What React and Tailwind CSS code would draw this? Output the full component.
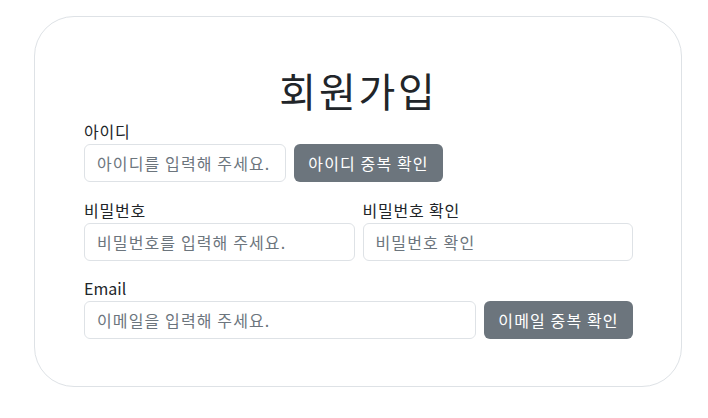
export default function App() {
  const font = { fontFamily: '"Noto Sans CJK KR", "Noto Sans", sans-serif' };
  const input =
    "h-[38px] rounded-[6px] border border-[#dee2e6] bg-white px-[12px] text-[16px] tracking-[0.07em] text-[#212529] placeholder:text-[#6c757d] outline-none";
  const btn =
    "h-[38px] w-[149px] shrink-0 rounded-[6px] bg-[#6c757d] text-[16px] tracking-[0.07em] text-white";
  const label = "block text-[16px] leading-[24px] tracking-[0.05em] text-[#212529] mb-[1px]";

  return (
    <div className="min-h-screen bg-white" style={font}>
      <div className="ml-[34px] mt-[16px] w-[648px] rounded-[40px] border border-[#dee2e6] pl-[49px] pr-[48px] pt-[45px] pb-[47px]">
        <h1 className="text-center text-[40px] leading-[56px] tracking-[0.07em] text-[#212529] mb-[1px]">회원가입</h1>

        <div className="mb-[16px]">
          <label className={label}>아이디</label>
          <div className="flex gap-[8px]">
            <input className={`${input} w-[202px]`} placeholder="아이디를 입력해 주세요." />
            <button className={btn}>아이디 중복 확인</button>
          </div>
        </div>

        <div className="mb-[15px] flex gap-[8px]">
          <div className="flex-1">
            <label className={label}>비밀번호</label>
            <input type="password" className={`${input} w-full`} placeholder="비밀번호를 입력해 주세요." />
          </div>
          <div className="flex-1">
            <label className={label}>비밀번호 확인</label>
            <input type="password" className={`${input} w-full`} placeholder="비밀번호 확인" />
          </div>
        </div>

        <div>
          <label className="block text-[16px] leading-[24px] text-[#212529] mb-[1px]">Email</label>
          <div className="flex gap-[8px]">
            <input className={`${input} flex-1 min-w-0`} placeholder="이메일을 입력해 주세요." />
            <button className={btn}>이메일 중복 확인</button>
          </div>
        </div>
      </div>
    </div>
  );
}
